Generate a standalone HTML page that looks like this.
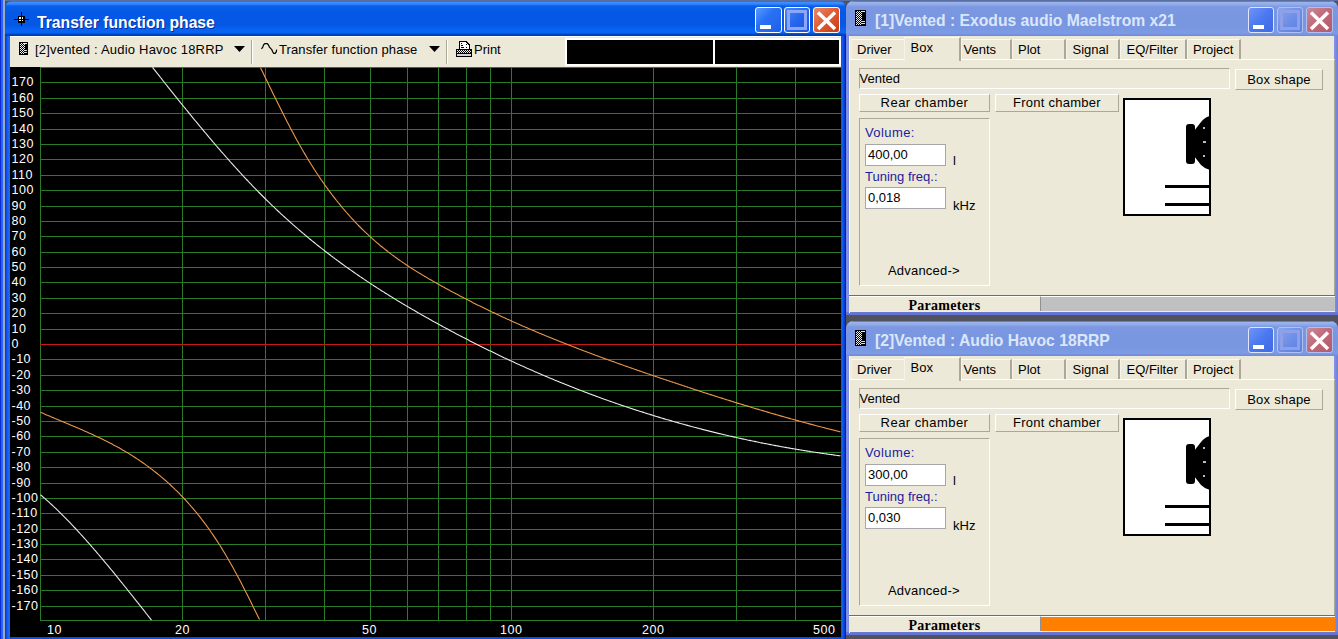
<!DOCTYPE html><html><head><meta charset="utf-8"><style>html,body{margin:0;padding:0;width:1338px;height:639px;overflow:hidden;position:relative}body{font-family:"Liberation Sans",sans-serif}</style></head><body><svg width="0" height="0" style="position:absolute"><defs><pattern id="chk" width="2" height="2" patternUnits="userSpaceOnUse"><rect width="2" height="2" fill="#f0f0f0"/><rect width="1" height="1" fill="#000"/><rect x="1" y="1" width="1" height="1" fill="#000"/></pattern></defs></svg>
<div style="position:absolute;left:0;top:0;width:1338px;height:639px;background:#50535e"></div>
<div style="position:absolute;left:0px;top:0px;width:1338px;height:1px;background:#5a6ea2"></div>
<div style="position:absolute;left:0px;top:0px;width:1px;height:639px;background:#0a2ccf"></div>
<div style="position:absolute;left:1px;top:0px;width:2px;height:639px;background:#2563ff"></div>
<div style="position:absolute;left:3px;top:0px;width:2px;height:639px;background:#9eabbd"></div>
<div style="position:absolute;left:5px;top:1px;width:841px;height:650px;border-radius:7px 7px 0 0;overflow:hidden;background:linear-gradient(to right,#0831d9 0px,#0b44e0 1px,#1a63f5 3px,#1d66f7 5px,#0b4ce6 5px,#0b4ce6 836px,#1261f3 837px,#0a45df 839px,#0016a8 841px)"></div>
<div style="position:absolute;left:5px;top:1px;width:841px;height:35px;border-radius:7px 7px 0 0;background:linear-gradient(to bottom,#2456c8 0px,#3d90ff 1px,#3486fc 3px,#0a5eec 5px,#0558e6 12px,#0458e4 24px,#0862f2 28px,#0866f5 32px,#0048c4 33px,#003aa8 35px)"></div>
<svg style="position:absolute;left:12px;top:11px" width="18" height="17" viewBox="0 0 18 17" shape-rendering="crispEdges"><g fill="#000"><rect x="9" y="1" width="1" height="14"/><rect x="2" y="8" width="15" height="1"/><rect x="6" y="5" width="7" height="7"/></g><g fill="#f4f4f4"><rect x="7" y="6" width="2" height="2"/><rect x="10" y="6" width="1" height="2"/><rect x="7" y="9" width="2" height="1"/><rect x="10" y="9" width="1" height="1"/></g></svg>
<div style="position:absolute;left:37px;top:15.21px;font-family:'Liberation Sans', sans-serif;font-size:15.7px;line-height:15.7px;color:#fff;font-weight:700;white-space:pre;letter-spacing:0px;text-shadow:1px 1px 0 #0a2a9a">Transfer function phase</div>
<div style="position:absolute;left:755px;top:7px;width:25px;height:24px;border:1px solid #ffffff;border-radius:3px;background:linear-gradient(135deg,#5a9bff 0%,#2a72f5 40%,#1d5fe8 100%)"></div>
<div style="position:absolute;left:760px;top:25px;width:11px;height:4px;background:#fff"></div>
<div style="position:absolute;left:784px;top:7px;width:24px;height:24px;border:1px solid #ffffff;border-radius:3px;background:linear-gradient(135deg,#4a8af8 0%,#2566ec 50%,#1a56e0 100%)"></div>
<div style="position:absolute;left:787px;top:10px;width:14px;height:14px;border:3px solid #8ea6f9"></div>
<div style="position:absolute;left:813px;top:7px;width:25px;height:24px;border:1px solid #ffffff;border-radius:3px;background:linear-gradient(135deg,#e88a6a 0%,#e05a32 50%,#c83c14 100%)"></div>
<svg style="position:absolute;left:813px;top:7px" width="27" height="26"><path d="M5,5.6 L22,22 M22,5.6 L5,22" stroke="#fff" stroke-width="3.5" stroke-linecap="butt"/></svg>
<div style="position:absolute;left:10px;top:36px;width:831px;height:31px;background:#ece9d8;border-top:1px solid #fff;box-sizing:border-box"></div>
<svg style="position:absolute;left:19px;top:42px" width="9" height="13" viewBox="0 0 9 13" shape-rendering="crispEdges"><rect x="0" y="0" width="9" height="13" fill="#000"/><rect x="1" y="1" width="5" height="11" fill="url(#chk)"/><rect x="5" y="1" width="3" height="1" fill="#eee"/><rect x="5" y="8" width="3" height="1" fill="#ddd"/><rect x="5" y="10" width="3" height="1" fill="#ddd"/></svg>
<div style="position:absolute;left:35px;top:43.00px;font-family:'Liberation Sans', sans-serif;font-size:13px;line-height:13px;color:#000;font-weight:400;white-space:pre;letter-spacing:0.2px;">[2]vented : Audio Havoc 18RRP</div>
<svg style="position:absolute;left:234px;top:46px" width="11" height="6"><path d="M0,0 L11,0 L5.5,6 Z" fill="#000"/></svg>
<div style="position:absolute;left:251px;top:40px;width:1px;height:24px;background:#aca899;border-right:1px solid #fff"></div>
<svg style="position:absolute;left:254px;top:38px" width="30" height="20" viewBox="254 38 30 20"><path d="M261.5,48.8 L262.8,47 L263.6,44.8 L264.8,43.6 L267.2,43.6 L268.4,44.8 L269.3,47 L270.6,48.4 L271.8,49.6 L272.6,51.8 L273.8,53.4 L275.2,53.4 L276.3,51.8 L276.6,49.6" stroke="#000" stroke-width="1.25" fill="none"/></svg>
<div style="position:absolute;left:279px;top:43.00px;font-family:'Liberation Sans', sans-serif;font-size:13px;line-height:13px;color:#000;font-weight:400;white-space:pre;letter-spacing:0.1px;">Transfer function phase</div>
<svg style="position:absolute;left:429px;top:46px" width="11" height="6"><path d="M0,0 L11,0 L5.5,6 Z" fill="#000"/></svg>
<div style="position:absolute;left:446px;top:40px;width:1px;height:24px;background:#aca899;border-right:1px solid #fff"></div>
<svg style="position:absolute;left:450px;top:36px" width="26" height="24" viewBox="450 36 26 24" shape-rendering="crispEdges"><path d="M459.5,41.5 H466 L469.5,45 V49.5 H459.5 Z" fill="#fff" stroke="#000"/><rect x="461" y="43" width="1" height="1" fill="#000"/><rect x="461" y="45" width="2" height="1" fill="#000"/><rect x="461" y="47" width="3" height="1" fill="#000"/><rect x="466" y="47" width="1" height="1" fill="#000"/><rect x="466" y="44" width="1" height="1" fill="#000"/><rect x="456" y="49" width="16" height="8" fill="#000"/><rect x="457" y="50" width="14" height="3" fill="url(#chk)"/><rect x="457" y="54" width="14" height="2" fill="#d4d4d4"/></svg>
<div style="position:absolute;left:474px;top:43.00px;font-family:'Liberation Sans', sans-serif;font-size:13px;line-height:13px;color:#000;font-weight:400;white-space:pre;letter-spacing:0px;">Print</div>
<div style="position:absolute;left:565px;top:38px;width:276px;height:28px;background:#fff"></div>
<div style="position:absolute;left:567px;top:40px;width:146px;height:24px;background:#000"></div>
<div style="position:absolute;left:715px;top:40px;width:124px;height:24px;background:#000"></div>
<svg style="position:absolute;left:10px;top:67px" width="831" height="570" viewBox="10 67 831 570"><rect x="10" y="67" width="831" height="570" fill="#000"/><g shape-rendering="crispEdges"><rect x="40" y="67" width="801" height="1" fill="#2a7a2a"/><rect x="40" y="82" width="801" height="1" fill="#2a7a2a"/><rect x="40" y="98" width="801" height="1" fill="#2a7a2a"/><rect x="40" y="113" width="801" height="1" fill="#2a7a2a"/><rect x="40" y="129" width="801" height="1" fill="#2a7a2a"/><rect x="40" y="144" width="801" height="1" fill="#2a7a2a"/><rect x="40" y="159" width="801" height="1" fill="#2a7a2a"/><rect x="40" y="175" width="801" height="1" fill="#2a7a2a"/><rect x="40" y="190" width="801" height="1" fill="#2a7a2a"/><rect x="40" y="206" width="801" height="1" fill="#2a7a2a"/><rect x="40" y="221" width="801" height="1" fill="#2a7a2a"/><rect x="40" y="236" width="801" height="1" fill="#2a7a2a"/><rect x="40" y="252" width="801" height="1" fill="#2a7a2a"/><rect x="40" y="267" width="801" height="1" fill="#2a7a2a"/><rect x="40" y="282" width="801" height="1" fill="#2a7a2a"/><rect x="40" y="298" width="801" height="1" fill="#2a7a2a"/><rect x="40" y="313" width="801" height="1" fill="#2a7a2a"/><rect x="40" y="329" width="801" height="1" fill="#2a7a2a"/><rect x="40" y="344" width="801" height="1" fill="#2a7a2a"/><rect x="40" y="359" width="801" height="1" fill="#2a7a2a"/><rect x="40" y="375" width="801" height="1" fill="#2a7a2a"/><rect x="40" y="390" width="801" height="1" fill="#2a7a2a"/><rect x="40" y="406" width="801" height="1" fill="#2a7a2a"/><rect x="40" y="421" width="801" height="1" fill="#2a7a2a"/><rect x="40" y="436" width="801" height="1" fill="#2a7a2a"/><rect x="40" y="452" width="801" height="1" fill="#2a7a2a"/><rect x="40" y="467" width="801" height="1" fill="#2a7a2a"/><rect x="40" y="483" width="801" height="1" fill="#2a7a2a"/><rect x="40" y="498" width="801" height="1" fill="#2a7a2a"/><rect x="40" y="513" width="801" height="1" fill="#2a7a2a"/><rect x="40" y="529" width="801" height="1" fill="#2a7a2a"/><rect x="40" y="544" width="801" height="1" fill="#2a7a2a"/><rect x="40" y="559" width="801" height="1" fill="#2a7a2a"/><rect x="40" y="575" width="801" height="1" fill="#2a7a2a"/><rect x="40" y="590" width="801" height="1" fill="#2a7a2a"/><rect x="40" y="606" width="801" height="1" fill="#2a7a2a"/><rect x="40" y="620" width="801" height="1" fill="#2a7a2a"/><rect x="40" y="67" width="1" height="554" fill="#2a7a2a"/><rect x="182" y="67" width="1" height="554" fill="#2a7a2a"/><rect x="265" y="67" width="1" height="554" fill="#2a7a2a"/><rect x="324" y="67" width="1" height="554" fill="#2a7a2a"/><rect x="370" y="67" width="1" height="554" fill="#2a7a2a"/><rect x="407" y="67" width="1" height="554" fill="#2a7a2a"/><rect x="438" y="67" width="1" height="554" fill="#2a7a2a"/><rect x="466" y="67" width="1" height="554" fill="#2a7a2a"/><rect x="490" y="67" width="1" height="554" fill="#2a7a2a"/><rect x="511" y="67" width="1" height="554" fill="#2a7a2a"/><rect x="653" y="67" width="1" height="554" fill="#2a7a2a"/><rect x="736" y="67" width="1" height="554" fill="#2a7a2a"/><rect x="795" y="67" width="1" height="554" fill="#2a7a2a"/></g><rect x="40" y="344" width="801" height="1" fill="#c81818" shape-rendering="crispEdges"/><g fill="none" stroke-width="1.1"><path d="M40.5,494.8 41.5,495.6 42.5,496.5 43.5,497.3 44.5,498.2 45.5,499.1 46.5,500.0 47.5,500.8 48.5,501.7 49.5,502.7 50.5,503.6 51.5,504.5 52.5,505.4 53.5,506.4 54.5,507.3 55.5,508.2 56.5,509.2 57.5,510.2 58.5,511.1 59.5,512.1 60.5,513.1 61.5,514.1 62.5,515.1 63.5,516.1 64.5,517.1 65.5,518.1 66.5,519.1 67.5,520.1 68.5,521.2 69.5,522.2 70.5,523.2 71.5,524.3 72.5,525.3 73.5,526.4 74.5,527.5 75.5,528.5 76.5,529.6 77.5,530.7 78.5,531.8 79.5,532.9 80.5,534.0 81.5,535.1 82.5,536.2 83.5,537.3 84.5,538.4 85.5,539.5 86.5,540.6 87.5,541.8 88.5,542.9 89.5,544.0 90.5,545.2 91.5,546.3 92.5,547.5 93.5,548.6 94.5,549.8 95.5,550.9 96.5,552.1 97.5,553.3 98.5,554.5 99.5,555.6 100.5,556.8 101.5,558.0 102.5,559.2 103.5,560.4 104.5,561.6 105.5,562.8 106.5,564.0 107.5,565.2 108.5,566.4 109.5,567.6 110.5,568.8 111.5,570.0 112.5,571.2 113.5,572.4 114.5,573.7 115.5,574.9 116.5,576.1 117.5,577.4 118.5,578.6 119.5,579.8 120.5,581.1 121.5,582.3 122.5,583.5 123.5,584.8 124.5,586.0 125.5,587.3 126.5,588.5 127.5,589.8 128.5,591.0 129.5,592.3 130.5,593.5 131.5,594.8 132.5,596.0 133.5,597.3 134.5,598.6 135.5,599.8 136.5,601.1 137.5,602.4 138.5,603.6 139.5,604.9 140.5,606.1 141.5,607.4 142.5,608.7 143.5,609.9 144.5,611.2 145.5,612.5 146.5,613.8 147.5,615.0 148.5,616.3 149.5,617.6 150.5,618.8 151.5,620.1" stroke="#ececec"/><path d="M152.5,67.3 153.5,68.6 154.5,69.9 155.5,71.1 156.5,72.4 157.5,73.7 158.5,74.9 159.5,76.2 160.5,77.5 161.5,78.7 162.5,80.0 163.5,81.3 164.5,82.5 165.5,83.8 166.5,85.0 167.5,86.3 168.5,87.6 169.5,88.8 170.5,90.1 171.5,91.3 172.5,92.6 173.5,93.8 174.5,95.1 175.5,96.3 176.5,97.6 177.5,98.8 178.5,100.1 179.5,101.3 180.5,102.6 181.5,103.8 182.5,105.0 183.5,106.3 184.5,107.5 185.5,108.7 186.5,110.0 187.5,111.2 188.5,112.4 189.5,113.7 190.5,114.9 191.5,116.1 192.5,117.3 193.5,118.6 194.5,119.8 195.5,121.0 196.5,122.2 197.5,123.4 198.5,124.6 199.5,125.8 200.5,127.0 201.5,128.2 202.5,129.4 203.5,130.6 204.5,131.8 205.5,133.0 206.5,134.2 207.5,135.4 208.5,136.6 209.5,137.8 210.5,138.9 211.5,140.1 212.5,141.3 213.5,142.5 214.5,143.6 215.5,144.8 216.5,146.0 217.5,147.1 218.5,148.3 219.5,149.4 220.5,150.6 221.5,151.8 222.5,152.9 223.5,154.0 224.5,155.2 225.5,156.3 226.5,157.5 227.5,158.6 228.5,159.7 229.5,160.8 230.5,162.0 231.5,163.1 232.5,164.2 233.5,165.3 234.5,166.4 235.5,167.5 236.5,168.6 237.5,169.7 238.5,170.8 239.5,171.9 240.5,173.0 241.5,174.1 242.5,175.2 243.5,176.3 244.5,177.3 245.5,178.4 246.5,179.5 247.5,180.5 248.5,181.6 249.5,182.6 250.5,183.7 251.5,184.7 252.5,185.8 253.5,186.8 254.5,187.9 255.5,188.9 256.5,189.9 257.5,190.9 258.5,192.0 259.5,193.0 260.5,194.0 261.5,195.0 262.5,196.0 263.5,197.0 264.5,198.0 265.5,199.0 266.5,200.0 267.5,200.9 268.5,201.9 269.5,202.9 270.5,203.9 271.5,204.8 272.5,205.8 273.5,206.7 274.5,207.7 275.5,208.6 276.5,209.6 277.5,210.5 278.5,211.5 279.5,212.4 280.5,213.3 281.5,214.3 282.5,215.2 283.5,216.1 284.5,217.0 285.5,217.9 286.5,218.8 287.5,219.7 288.5,220.6 289.5,221.5 290.5,222.4 291.5,223.3 292.5,224.2 293.5,225.1 294.5,225.9 295.5,226.8 296.5,227.7 297.5,228.6 298.5,229.4 299.5,230.3 300.5,231.1 301.5,232.0 302.5,232.8 303.5,233.7 304.5,234.5 305.5,235.4 306.5,236.2 307.5,237.0 308.5,237.9 309.5,238.7 310.5,239.5 311.5,240.3 312.5,241.2 313.5,242.0 314.5,242.8 315.5,243.6 316.5,244.4 317.5,245.2 318.5,246.0 319.5,246.8 320.5,247.6 321.5,248.4 322.5,249.1 323.5,249.9 324.5,250.7 325.5,251.5 326.5,252.2 327.5,253.0 328.5,253.8 329.5,254.5 330.5,255.3 331.5,256.1 332.5,256.8 333.5,257.6 334.5,258.3 335.5,259.1 336.5,259.8 337.5,260.6 338.5,261.3 339.5,262.0 340.5,262.8 341.5,263.5 342.5,264.2 343.5,264.9 344.5,265.7 345.5,266.4 346.5,267.1 347.5,267.8 348.5,268.5 349.5,269.2 350.5,269.9 351.5,270.6 352.5,271.3 353.5,272.0 354.5,272.7 355.5,273.4 356.5,274.1 357.5,274.8 358.5,275.5 359.5,276.2 360.5,276.9 361.5,277.5 362.5,278.2 363.5,278.9 364.5,279.6 365.5,280.2 366.5,280.9 367.5,281.6 368.5,282.2 369.5,282.9 370.5,283.5 371.5,284.2 372.5,284.9 373.5,285.5 374.5,286.2 375.5,286.8 376.5,287.5 377.5,288.1 378.5,288.7 379.5,289.4 380.5,290.0 381.5,290.7 382.5,291.3 383.5,291.9 384.5,292.5 385.5,293.2 386.5,293.8 387.5,294.4 388.5,295.0 389.5,295.7 390.5,296.3 391.5,296.9 392.5,297.5 393.5,298.1 394.5,298.7 395.5,299.4 396.5,300.0 397.5,300.6 398.5,301.2 399.5,301.8 400.5,302.4 401.5,303.0 402.5,303.6 403.5,304.2 404.5,304.8 405.5,305.4 406.5,306.0 407.5,306.5 408.5,307.1 409.5,307.7 410.5,308.3 411.5,308.9 412.5,309.5 413.5,310.1 414.5,310.6 415.5,311.2 416.5,311.8 417.5,312.4 418.5,312.9 419.5,313.5 420.5,314.1 421.5,314.7 422.5,315.2 423.5,315.8 424.5,316.4 425.5,316.9 426.5,317.5 427.5,318.1 428.5,318.6 429.5,319.2 430.5,319.8 431.5,320.3 432.5,320.9 433.5,321.4 434.5,322.0 435.5,322.5 436.5,323.1 437.5,323.6 438.5,324.2 439.5,324.7 440.5,325.3 441.5,325.8 442.5,326.4 443.5,326.9 444.5,327.5 445.5,328.0 446.5,328.6 447.5,329.1 448.5,329.6 449.5,330.2 450.5,330.7 451.5,331.2 452.5,331.8 453.5,332.3 454.5,332.8 455.5,333.4 456.5,333.9 457.5,334.4 458.5,334.9 459.5,335.5 460.5,336.0 461.5,336.5 462.5,337.0 463.5,337.6 464.5,338.1 465.5,338.6 466.5,339.1 467.5,339.6 468.5,340.1 469.5,340.7 470.5,341.2 471.5,341.7 472.5,342.2 473.5,342.7 474.5,343.2 475.5,343.7 476.5,344.2 477.5,344.7 478.5,345.2 479.5,345.7 480.5,346.2 481.5,346.7 482.5,347.2 483.5,347.7 484.5,348.2 485.5,348.7 486.5,349.2 487.5,349.7 488.5,350.2 489.5,350.7 490.5,351.1 491.5,351.6 492.5,352.1 493.5,352.6 494.5,353.1 495.5,353.6 496.5,354.1 497.5,354.5 498.5,355.0 499.5,355.5 500.5,356.0 501.5,356.4 502.5,356.9 503.5,357.4 504.5,357.9 505.5,358.3 506.5,358.8 507.5,359.3 508.5,359.7 509.5,360.2 510.5,360.7 511.5,361.1 512.5,361.6 513.5,362.0 514.5,362.5 515.5,363.0 516.5,363.4 517.5,363.9 518.5,364.3 519.5,364.8 520.5,365.2 521.5,365.7 522.5,366.1 523.5,366.6 524.5,367.0 525.5,367.5 526.5,367.9 527.5,368.4 528.5,368.8 529.5,369.3 530.5,369.7 531.5,370.1 532.5,370.6 533.5,371.0 534.5,371.5 535.5,371.9 536.5,372.3 537.5,372.8 538.5,373.2 539.5,373.6 540.5,374.1 541.5,374.5 542.5,374.9 543.5,375.3 544.5,375.8 545.5,376.2 546.5,376.6 547.5,377.0 548.5,377.5 549.5,377.9 550.5,378.3 551.5,378.7 552.5,379.1 553.5,379.5 554.5,380.0 555.5,380.4 556.5,380.8 557.5,381.2 558.5,381.6 559.5,382.0 560.5,382.4 561.5,382.8 562.5,383.2 563.5,383.6 564.5,384.0 565.5,384.4 566.5,384.8 567.5,385.2 568.5,385.6 569.5,386.0 570.5,386.4 571.5,386.8 572.5,387.2 573.5,387.6 574.5,388.0 575.5,388.4 576.5,388.8 577.5,389.2 578.5,389.6 579.5,390.0 580.5,390.3 581.5,390.7 582.5,391.1 583.5,391.5 584.5,391.9 585.5,392.2 586.5,392.6 587.5,393.0 588.5,393.4 589.5,393.8 590.5,394.1 591.5,394.5 592.5,394.9 593.5,395.2 594.5,395.6 595.5,396.0 596.5,396.4 597.5,396.7 598.5,397.1 599.5,397.4 600.5,397.8 601.5,398.2 602.5,398.5 603.5,398.9 604.5,399.3 605.5,399.6 606.5,400.0 607.5,400.3 608.5,400.7 609.5,401.0 610.5,401.4 611.5,401.7 612.5,402.1 613.5,402.4 614.5,402.8 615.5,403.1 616.5,403.5 617.5,403.8 618.5,404.2 619.5,404.5 620.5,404.9 621.5,405.2 622.5,405.5 623.5,405.9 624.5,406.2 625.5,406.6 626.5,406.9 627.5,407.2 628.5,407.6 629.5,407.9 630.5,408.2 631.5,408.5 632.5,408.9 633.5,409.2 634.5,409.5 635.5,409.9 636.5,410.2 637.5,410.5 638.5,410.8 639.5,411.2 640.5,411.5 641.5,411.8 642.5,412.1 643.5,412.4 644.5,412.7 645.5,413.1 646.5,413.4 647.5,413.7 648.5,414.0 649.5,414.3 650.5,414.6 651.5,414.9 652.5,415.2 653.5,415.6 654.5,415.9 655.5,416.2 656.5,416.5 657.5,416.8 658.5,417.1 659.5,417.4 660.5,417.7 661.5,418.0 662.5,418.3 663.5,418.6 664.5,418.9 665.5,419.2 666.5,419.5 667.5,419.7 668.5,420.0 669.5,420.3 670.5,420.6 671.5,420.9 672.5,421.2 673.5,421.5 674.5,421.8 675.5,422.1 676.5,422.3 677.5,422.6 678.5,422.9 679.5,423.2 680.5,423.5 681.5,423.7 682.5,424.0 683.5,424.3 684.5,424.6 685.5,424.8 686.5,425.1 687.5,425.4 688.5,425.7 689.5,425.9 690.5,426.2 691.5,426.5 692.5,426.7 693.5,427.0 694.5,427.3 695.5,427.5 696.5,427.8 697.5,428.1 698.5,428.3 699.5,428.6 700.5,428.8 701.5,429.1 702.5,429.4 703.5,429.6 704.5,429.9 705.5,430.1 706.5,430.4 707.5,430.6 708.5,430.9 709.5,431.1 710.5,431.4 711.5,431.6 712.5,431.9 713.5,432.1 714.5,432.4 715.5,432.6 716.5,432.9 717.5,433.1 718.5,433.4 719.5,433.6 720.5,433.8 721.5,434.1 722.5,434.3 723.5,434.6 724.5,434.8 725.5,435.0 726.5,435.3 727.5,435.5 728.5,435.7 729.5,436.0 730.5,436.2 731.5,436.4 732.5,436.6 733.5,436.9 734.5,437.1 735.5,437.3 736.5,437.5 737.5,437.8 738.5,438.0 739.5,438.2 740.5,438.4 741.5,438.7 742.5,438.9 743.5,439.1 744.5,439.3 745.5,439.5 746.5,439.7 747.5,440.0 748.5,440.2 749.5,440.4 750.5,440.6 751.5,440.8 752.5,441.0 753.5,441.2 754.5,441.4 755.5,441.6 756.5,441.8 757.5,442.0 758.5,442.2 759.5,442.5 760.5,442.7 761.5,442.9 762.5,443.1 763.5,443.3 764.5,443.5 765.5,443.6 766.5,443.8 767.5,444.0 768.5,444.2 769.5,444.4 770.5,444.6 771.5,444.8 772.5,445.0 773.5,445.2 774.5,445.4 775.5,445.6 776.5,445.8 777.5,445.9 778.5,446.1 779.5,446.3 780.5,446.5 781.5,446.7 782.5,446.9 783.5,447.0 784.5,447.2 785.5,447.4 786.5,447.6 787.5,447.8 788.5,447.9 789.5,448.1 790.5,448.3 791.5,448.5 792.5,448.6 793.5,448.8 794.5,449.0 795.5,449.1 796.5,449.3 797.5,449.5 798.5,449.6 799.5,449.8 800.5,450.0 801.5,450.1 802.5,450.3 803.5,450.5 804.5,450.6 805.5,450.8 806.5,450.9 807.5,451.1 808.5,451.3 809.5,451.4 810.5,451.6 811.5,451.7 812.5,451.9 813.5,452.0 814.5,452.2 815.5,452.3 816.5,452.5 817.5,452.6 818.5,452.8 819.5,452.9 820.5,453.1 821.5,453.2 822.5,453.4 823.5,453.5 824.5,453.7 825.5,453.8 826.5,453.9 827.5,454.1 828.5,454.2 829.5,454.4 830.5,454.5 831.5,454.6 832.5,454.8 833.5,454.9 834.5,455.1 835.5,455.2 836.5,455.3 837.5,455.5 838.5,455.6 839.5,455.7 840.5,455.8" stroke="#ececec"/><path d="M40.5,412.3 41.5,412.7 42.5,413.1 43.5,413.6 44.5,414.0 45.5,414.4 46.5,414.9 47.5,415.3 48.5,415.7 49.5,416.1 50.5,416.6 51.5,417.0 52.5,417.4 53.5,417.8 54.5,418.2 55.5,418.7 56.5,419.1 57.5,419.5 58.5,419.9 59.5,420.3 60.5,420.8 61.5,421.2 62.5,421.6 63.5,422.0 64.5,422.4 65.5,422.8 66.5,423.3 67.5,423.7 68.5,424.1 69.5,424.5 70.5,424.9 71.5,425.4 72.5,425.8 73.5,426.2 74.5,426.6 75.5,427.1 76.5,427.5 77.5,427.9 78.5,428.3 79.5,428.8 80.5,429.2 81.5,429.6 82.5,430.1 83.5,430.5 84.5,431.0 85.5,431.4 86.5,431.8 87.5,432.3 88.5,432.7 89.5,433.2 90.5,433.6 91.5,434.1 92.5,434.5 93.5,435.0 94.5,435.5 95.5,435.9 96.5,436.4 97.5,436.9 98.5,437.3 99.5,437.8 100.5,438.3 101.5,438.8 102.5,439.3 103.5,439.8 104.5,440.3 105.5,440.7 106.5,441.3 107.5,441.8 108.5,442.3 109.5,442.8 110.5,443.3 111.5,443.8 112.5,444.3 113.5,444.9 114.5,445.4 115.5,445.9 116.5,446.5 117.5,447.0 118.5,447.6 119.5,448.1 120.5,448.7 121.5,449.3 122.5,449.9 123.5,450.4 124.5,451.0 125.5,451.6 126.5,452.2 127.5,452.8 128.5,453.4 129.5,454.0 130.5,454.6 131.5,455.2 132.5,455.9 133.5,456.5 134.5,457.2 135.5,457.8 136.5,458.5 137.5,459.1 138.5,459.8 139.5,460.5 140.5,461.1 141.5,461.8 142.5,462.5 143.5,463.2 144.5,463.9 145.5,464.6 146.5,465.4 147.5,466.1 148.5,466.8 149.5,467.6 150.5,468.3 151.5,469.1 152.5,469.8 153.5,470.6 154.5,471.4 155.5,472.2 156.5,473.0 157.5,473.8 158.5,474.6 159.5,475.4 160.5,476.2 161.5,477.1 162.5,477.9 163.5,478.8 164.5,479.6 165.5,480.5 166.5,481.4 167.5,482.3 168.5,483.2 169.5,484.1 170.5,485.0 171.5,486.0 172.5,486.9 173.5,487.8 174.5,488.8 175.5,489.8 176.5,490.7 177.5,491.7 178.5,492.7 179.5,493.7 180.5,494.8 181.5,495.8 182.5,496.8 183.5,497.9 184.5,499.0 185.5,500.0 186.5,501.1 187.5,502.2 188.5,503.3 189.5,504.5 190.5,505.6 191.5,506.8 192.5,507.9 193.5,509.1 194.5,510.3 195.5,511.5 196.5,512.7 197.5,513.9 198.5,515.2 199.5,516.4 200.5,517.7 201.5,519.0 202.5,520.3 203.5,521.6 204.5,522.9 205.5,524.3 206.5,525.6 207.5,527.0 208.5,528.4 209.5,529.8 210.5,531.2 211.5,532.7 212.5,534.1 213.5,535.6 214.5,537.1 215.5,538.6 216.5,540.1 217.5,541.6 218.5,543.2 219.5,544.8 220.5,546.3 221.5,547.9 222.5,549.6 223.5,551.2 224.5,552.9 225.5,554.5 226.5,556.2 227.5,557.9 228.5,559.7 229.5,561.4 230.5,563.2 231.5,564.9 232.5,566.7 233.5,568.5 234.5,570.4 235.5,572.2 236.5,574.1 237.5,575.9 238.5,577.8 239.5,579.7 240.5,581.6 241.5,583.6 242.5,585.5 243.5,587.4 244.5,589.4 245.5,591.4 246.5,593.3 247.5,595.3 248.5,597.3 249.5,599.3 250.5,601.3 251.5,603.3 252.5,605.4 253.5,607.4 254.5,609.4 255.5,611.5 256.5,613.5 257.5,615.5 258.5,617.6 259.5,619.6" stroke="#ee9a4c"/><path d="M260.5,67.7 261.5,69.7 262.5,71.8 263.5,73.8 264.5,75.9 265.5,78.0 266.5,80.0 267.5,82.1 268.5,84.2 269.5,86.2 270.5,88.3 271.5,90.3 272.5,92.4 273.5,94.4 274.5,96.5 275.5,98.5 276.5,100.5 277.5,102.6 278.5,104.6 279.5,106.6 280.5,108.6 281.5,110.6 282.5,112.6 283.5,114.6 284.5,116.6 285.5,118.5 286.5,120.5 287.5,122.4 288.5,124.3 289.5,126.3 290.5,128.2 291.5,130.1 292.5,132.0 293.5,133.8 294.5,135.7 295.5,137.5 296.5,139.4 297.5,141.2 298.5,143.0 299.5,144.8 300.5,146.5 301.5,148.3 302.5,150.0 303.5,151.7 304.5,153.4 305.5,155.1 306.5,156.8 307.5,158.5 308.5,160.1 309.5,161.7 310.5,163.4 311.5,165.0 312.5,166.5 313.5,168.1 314.5,169.7 315.5,171.2 316.5,172.7 317.5,174.2 318.5,175.7 319.5,177.2 320.5,178.7 321.5,180.2 322.5,181.6 323.5,183.0 324.5,184.5 325.5,185.9 326.5,187.3 327.5,188.6 328.5,190.0 329.5,191.4 330.5,192.7 331.5,194.0 332.5,195.3 333.5,196.6 334.5,197.9 335.5,199.2 336.5,200.5 337.5,201.7 338.5,203.0 339.5,204.2 340.5,205.4 341.5,206.6 342.5,207.8 343.5,209.0 344.5,210.2 345.5,211.3 346.5,212.5 347.5,213.6 348.5,214.7 349.5,215.9 350.5,217.0 351.5,218.1 352.5,219.2 353.5,220.2 354.5,221.3 355.5,222.3 356.5,223.4 357.5,224.4 358.5,225.5 359.5,226.5 360.5,227.5 361.5,228.5 362.5,229.5 363.5,230.4 364.5,231.4 365.5,232.4 366.5,233.3 367.5,234.2 368.5,235.2 369.5,236.1 370.5,237.0 371.5,237.9 372.5,238.8 373.5,239.7 374.5,240.6 375.5,241.4 376.5,242.3 377.5,243.2 378.5,244.0 379.5,244.9 380.5,245.7 381.5,246.5 382.5,247.3 383.5,248.1 384.5,248.9 385.5,249.7 386.5,250.5 387.5,251.3 388.5,252.1 389.5,252.8 390.5,253.6 391.5,254.4 392.5,255.1 393.5,255.8 394.5,256.6 395.5,257.3 396.5,258.0 397.5,258.8 398.5,259.5 399.5,260.2 400.5,260.9 401.5,261.6 402.5,262.2 403.5,262.9 404.5,263.6 405.5,264.3 406.5,265.0 407.5,265.6 408.5,266.3 409.5,266.9 410.5,267.6 411.5,268.2 412.5,268.9 413.5,269.5 414.5,270.1 415.5,270.8 416.5,271.4 417.5,272.0 418.5,272.6 419.5,273.2 420.5,273.8 421.5,274.4 422.5,275.0 423.5,275.6 424.5,276.2 425.5,276.8 426.5,277.4 427.5,278.0 428.5,278.6 429.5,279.2 430.5,279.7 431.5,280.3 432.5,280.9 433.5,281.5 434.5,282.0 435.5,282.6 436.5,283.2 437.5,283.7 438.5,284.3 439.5,284.8 440.5,285.4 441.5,285.9 442.5,286.5 443.5,287.1 444.5,287.6 445.5,288.2 446.5,288.7 447.5,289.2 448.5,289.8 449.5,290.3 450.5,290.9 451.5,291.4 452.5,291.9 453.5,292.5 454.5,293.0 455.5,293.5 456.5,294.1 457.5,294.6 458.5,295.1 459.5,295.7 460.5,296.2 461.5,296.7 462.5,297.2 463.5,297.7 464.5,298.3 465.5,298.8 466.5,299.3 467.5,299.8 468.5,300.3 469.5,300.8 470.5,301.3 471.5,301.8 472.5,302.4 473.5,302.9 474.5,303.4 475.5,303.9 476.5,304.4 477.5,304.9 478.5,305.4 479.5,305.8 480.5,306.3 481.5,306.8 482.5,307.3 483.5,307.8 484.5,308.3 485.5,308.8 486.5,309.3 487.5,309.8 488.5,310.2 489.5,310.7 490.5,311.2 491.5,311.7 492.5,312.2 493.5,312.6 494.5,313.1 495.5,313.6 496.5,314.1 497.5,314.5 498.5,315.0 499.5,315.5 500.5,315.9 501.5,316.4 502.5,316.9 503.5,317.3 504.5,317.8 505.5,318.2 506.5,318.7 507.5,319.2 508.5,319.6 509.5,320.1 510.5,320.5 511.5,321.0 512.5,321.4 513.5,321.9 514.5,322.3 515.5,322.8 516.5,323.2 517.5,323.7 518.5,324.1 519.5,324.5 520.5,325.0 521.5,325.4 522.5,325.9 523.5,326.3 524.5,326.7 525.5,327.2 526.5,327.6 527.5,328.0 528.5,328.5 529.5,328.9 530.5,329.3 531.5,329.8 532.5,330.2 533.5,330.6 534.5,331.0 535.5,331.5 536.5,331.9 537.5,332.3 538.5,332.7 539.5,333.2 540.5,333.6 541.5,334.0 542.5,334.4 543.5,334.8 544.5,335.2 545.5,335.7 546.5,336.1 547.5,336.5 548.5,336.9 549.5,337.3 550.5,337.7 551.5,338.1 552.5,338.5 553.5,338.9 554.5,339.3 555.5,339.7 556.5,340.1 557.5,340.5 558.5,340.9 559.5,341.3 560.5,341.7 561.5,342.1 562.5,342.5 563.5,342.9 564.5,343.3 565.5,343.7 566.5,344.1 567.5,344.5 568.5,344.9 569.5,345.3 570.5,345.7 571.5,346.1 572.5,346.5 573.5,346.8 574.5,347.2 575.5,347.6 576.5,348.0 577.5,348.4 578.5,348.8 579.5,349.2 580.5,349.5 581.5,349.9 582.5,350.3 583.5,350.7 584.5,351.1 585.5,351.4 586.5,351.8 587.5,352.2 588.5,352.6 589.5,352.9 590.5,353.3 591.5,353.7 592.5,354.1 593.5,354.4 594.5,354.8 595.5,355.2 596.5,355.5 597.5,355.9 598.5,356.3 599.5,356.7 600.5,357.0 601.5,357.4 602.5,357.8 603.5,358.1 604.5,358.5 605.5,358.9 606.5,359.2 607.5,359.6 608.5,359.9 609.5,360.3 610.5,360.7 611.5,361.0 612.5,361.4 613.5,361.7 614.5,362.1 615.5,362.5 616.5,362.8 617.5,363.2 618.5,363.5 619.5,363.9 620.5,364.2 621.5,364.6 622.5,365.0 623.5,365.3 624.5,365.7 625.5,366.0 626.5,366.4 627.5,366.7 628.5,367.1 629.5,367.4 630.5,367.8 631.5,368.1 632.5,368.5 633.5,368.8 634.5,369.2 635.5,369.5 636.5,369.9 637.5,370.2 638.5,370.6 639.5,370.9 640.5,371.2 641.5,371.6 642.5,371.9 643.5,372.3 644.5,372.6 645.5,373.0 646.5,373.3 647.5,373.7 648.5,374.0 649.5,374.3 650.5,374.7 651.5,375.0 652.5,375.4 653.5,375.7 654.5,376.1 655.5,376.4 656.5,376.7 657.5,377.1 658.5,377.4 659.5,377.8 660.5,378.1 661.5,378.4 662.5,378.8 663.5,379.1 664.5,379.5 665.5,379.8 666.5,380.1 667.5,380.5 668.5,380.8 669.5,381.1 670.5,381.5 671.5,381.8 672.5,382.1 673.5,382.5 674.5,382.8 675.5,383.1 676.5,383.5 677.5,383.8 678.5,384.1 679.5,384.5 680.5,384.8 681.5,385.1 682.5,385.5 683.5,385.8 684.5,386.1 685.5,386.5 686.5,386.8 687.5,387.1 688.5,387.5 689.5,387.8 690.5,388.1 691.5,388.4 692.5,388.8 693.5,389.1 694.5,389.4 695.5,389.8 696.5,390.1 697.5,390.4 698.5,390.7 699.5,391.1 700.5,391.4 701.5,391.7 702.5,392.0 703.5,392.4 704.5,392.7 705.5,393.0 706.5,393.3 707.5,393.6 708.5,394.0 709.5,394.3 710.5,394.6 711.5,394.9 712.5,395.2 713.5,395.6 714.5,395.9 715.5,396.2 716.5,396.5 717.5,396.8 718.5,397.2 719.5,397.5 720.5,397.8 721.5,398.1 722.5,398.4 723.5,398.7 724.5,399.0 725.5,399.4 726.5,399.7 727.5,400.0 728.5,400.3 729.5,400.6 730.5,400.9 731.5,401.2 732.5,401.5 733.5,401.9 734.5,402.2 735.5,402.5 736.5,402.8 737.5,403.1 738.5,403.4 739.5,403.7 740.5,404.0 741.5,404.3 742.5,404.6 743.5,404.9 744.5,405.2 745.5,405.5 746.5,405.8 747.5,406.1 748.5,406.4 749.5,406.7 750.5,407.1 751.5,407.4 752.5,407.7 753.5,408.0 754.5,408.3 755.5,408.6 756.5,408.9 757.5,409.1 758.5,409.4 759.5,409.7 760.5,410.0 761.5,410.3 762.5,410.6 763.5,410.9 764.5,411.2 765.5,411.5 766.5,411.8 767.5,412.1 768.5,412.4 769.5,412.7 770.5,413.0 771.5,413.3 772.5,413.6 773.5,413.8 774.5,414.1 775.5,414.4 776.5,414.7 777.5,415.0 778.5,415.3 779.5,415.6 780.5,415.9 781.5,416.1 782.5,416.4 783.5,416.7 784.5,417.0 785.5,417.3 786.5,417.6 787.5,417.8 788.5,418.1 789.5,418.4 790.5,418.7 791.5,419.0 792.5,419.2 793.5,419.5 794.5,419.8 795.5,420.1 796.5,420.3 797.5,420.6 798.5,420.9 799.5,421.2 800.5,421.4 801.5,421.7 802.5,422.0 803.5,422.2 804.5,422.5 805.5,422.8 806.5,423.1 807.5,423.3 808.5,423.6 809.5,423.9 810.5,424.1 811.5,424.4 812.5,424.7 813.5,424.9 814.5,425.2 815.5,425.5 816.5,425.7 817.5,426.0 818.5,426.2 819.5,426.5 820.5,426.8 821.5,427.0 822.5,427.3 823.5,427.5 824.5,427.8 825.5,428.1 826.5,428.3 827.5,428.6 828.5,428.8 829.5,429.1 830.5,429.3 831.5,429.6 832.5,429.8 833.5,430.1 834.5,430.3 835.5,430.6 836.5,430.8 837.5,431.1 838.5,431.3 839.5,431.6 840.5,431.8" stroke="#ee9a4c"/></g></svg>
<div style="position:absolute;left:11.5px;top:75.72px;font-family:'Liberation Sans', sans-serif;font-size:12.5px;line-height:12.5px;color:#fff;font-weight:400;white-space:pre;letter-spacing:0.5px;">170</div>
<div style="position:absolute;left:11.5px;top:91.72px;font-family:'Liberation Sans', sans-serif;font-size:12.5px;line-height:12.5px;color:#fff;font-weight:400;white-space:pre;letter-spacing:0.5px;">160</div>
<div style="position:absolute;left:11.5px;top:106.72px;font-family:'Liberation Sans', sans-serif;font-size:12.5px;line-height:12.5px;color:#fff;font-weight:400;white-space:pre;letter-spacing:0.5px;">150</div>
<div style="position:absolute;left:11.5px;top:122.72px;font-family:'Liberation Sans', sans-serif;font-size:12.5px;line-height:12.5px;color:#fff;font-weight:400;white-space:pre;letter-spacing:0.5px;">140</div>
<div style="position:absolute;left:11.5px;top:137.72px;font-family:'Liberation Sans', sans-serif;font-size:12.5px;line-height:12.5px;color:#fff;font-weight:400;white-space:pre;letter-spacing:0.5px;">130</div>
<div style="position:absolute;left:11.5px;top:152.72px;font-family:'Liberation Sans', sans-serif;font-size:12.5px;line-height:12.5px;color:#fff;font-weight:400;white-space:pre;letter-spacing:0.5px;">120</div>
<div style="position:absolute;left:11.5px;top:168.72px;font-family:'Liberation Sans', sans-serif;font-size:12.5px;line-height:12.5px;color:#fff;font-weight:400;white-space:pre;letter-spacing:0.5px;">110</div>
<div style="position:absolute;left:11.5px;top:183.72px;font-family:'Liberation Sans', sans-serif;font-size:12.5px;line-height:12.5px;color:#fff;font-weight:400;white-space:pre;letter-spacing:0.5px;">100</div>
<div style="position:absolute;left:11.5px;top:199.72px;font-family:'Liberation Sans', sans-serif;font-size:12.5px;line-height:12.5px;color:#fff;font-weight:400;white-space:pre;letter-spacing:0.5px;">90</div>
<div style="position:absolute;left:11.5px;top:214.72px;font-family:'Liberation Sans', sans-serif;font-size:12.5px;line-height:12.5px;color:#fff;font-weight:400;white-space:pre;letter-spacing:0.5px;">80</div>
<div style="position:absolute;left:11.5px;top:229.72px;font-family:'Liberation Sans', sans-serif;font-size:12.5px;line-height:12.5px;color:#fff;font-weight:400;white-space:pre;letter-spacing:0.5px;">70</div>
<div style="position:absolute;left:11.5px;top:245.72px;font-family:'Liberation Sans', sans-serif;font-size:12.5px;line-height:12.5px;color:#fff;font-weight:400;white-space:pre;letter-spacing:0.5px;">60</div>
<div style="position:absolute;left:11.5px;top:260.72px;font-family:'Liberation Sans', sans-serif;font-size:12.5px;line-height:12.5px;color:#fff;font-weight:400;white-space:pre;letter-spacing:0.5px;">50</div>
<div style="position:absolute;left:11.5px;top:275.72px;font-family:'Liberation Sans', sans-serif;font-size:12.5px;line-height:12.5px;color:#fff;font-weight:400;white-space:pre;letter-spacing:0.5px;">40</div>
<div style="position:absolute;left:11.5px;top:291.72px;font-family:'Liberation Sans', sans-serif;font-size:12.5px;line-height:12.5px;color:#fff;font-weight:400;white-space:pre;letter-spacing:0.5px;">30</div>
<div style="position:absolute;left:11.5px;top:306.72px;font-family:'Liberation Sans', sans-serif;font-size:12.5px;line-height:12.5px;color:#fff;font-weight:400;white-space:pre;letter-spacing:0.5px;">20</div>
<div style="position:absolute;left:11.5px;top:322.72px;font-family:'Liberation Sans', sans-serif;font-size:12.5px;line-height:12.5px;color:#fff;font-weight:400;white-space:pre;letter-spacing:0.5px;">10</div>
<div style="position:absolute;left:11.5px;top:337.72px;font-family:'Liberation Sans', sans-serif;font-size:12.5px;line-height:12.5px;color:#fff;font-weight:400;white-space:pre;letter-spacing:0.5px;">0</div>
<div style="position:absolute;left:11.5px;top:352.72px;font-family:'Liberation Sans', sans-serif;font-size:12.5px;line-height:12.5px;color:#fff;font-weight:400;white-space:pre;letter-spacing:0.5px;">-10</div>
<div style="position:absolute;left:11.5px;top:368.72px;font-family:'Liberation Sans', sans-serif;font-size:12.5px;line-height:12.5px;color:#fff;font-weight:400;white-space:pre;letter-spacing:0.5px;">-20</div>
<div style="position:absolute;left:11.5px;top:383.72px;font-family:'Liberation Sans', sans-serif;font-size:12.5px;line-height:12.5px;color:#fff;font-weight:400;white-space:pre;letter-spacing:0.5px;">-30</div>
<div style="position:absolute;left:11.5px;top:399.72px;font-family:'Liberation Sans', sans-serif;font-size:12.5px;line-height:12.5px;color:#fff;font-weight:400;white-space:pre;letter-spacing:0.5px;">-40</div>
<div style="position:absolute;left:11.5px;top:414.72px;font-family:'Liberation Sans', sans-serif;font-size:12.5px;line-height:12.5px;color:#fff;font-weight:400;white-space:pre;letter-spacing:0.5px;">-50</div>
<div style="position:absolute;left:11.5px;top:429.72px;font-family:'Liberation Sans', sans-serif;font-size:12.5px;line-height:12.5px;color:#fff;font-weight:400;white-space:pre;letter-spacing:0.5px;">-60</div>
<div style="position:absolute;left:11.5px;top:445.72px;font-family:'Liberation Sans', sans-serif;font-size:12.5px;line-height:12.5px;color:#fff;font-weight:400;white-space:pre;letter-spacing:0.5px;">-70</div>
<div style="position:absolute;left:11.5px;top:460.72px;font-family:'Liberation Sans', sans-serif;font-size:12.5px;line-height:12.5px;color:#fff;font-weight:400;white-space:pre;letter-spacing:0.5px;">-80</div>
<div style="position:absolute;left:11.5px;top:476.72px;font-family:'Liberation Sans', sans-serif;font-size:12.5px;line-height:12.5px;color:#fff;font-weight:400;white-space:pre;letter-spacing:0.5px;">-90</div>
<div style="position:absolute;left:11.5px;top:491.72px;font-family:'Liberation Sans', sans-serif;font-size:12.5px;line-height:12.5px;color:#fff;font-weight:400;white-space:pre;letter-spacing:0.5px;">-100</div>
<div style="position:absolute;left:11.5px;top:506.72px;font-family:'Liberation Sans', sans-serif;font-size:12.5px;line-height:12.5px;color:#fff;font-weight:400;white-space:pre;letter-spacing:0.5px;">-110</div>
<div style="position:absolute;left:11.5px;top:522.72px;font-family:'Liberation Sans', sans-serif;font-size:12.5px;line-height:12.5px;color:#fff;font-weight:400;white-space:pre;letter-spacing:0.5px;">-120</div>
<div style="position:absolute;left:11.5px;top:537.72px;font-family:'Liberation Sans', sans-serif;font-size:12.5px;line-height:12.5px;color:#fff;font-weight:400;white-space:pre;letter-spacing:0.5px;">-130</div>
<div style="position:absolute;left:11.5px;top:552.72px;font-family:'Liberation Sans', sans-serif;font-size:12.5px;line-height:12.5px;color:#fff;font-weight:400;white-space:pre;letter-spacing:0.5px;">-140</div>
<div style="position:absolute;left:11.5px;top:568.72px;font-family:'Liberation Sans', sans-serif;font-size:12.5px;line-height:12.5px;color:#fff;font-weight:400;white-space:pre;letter-spacing:0.5px;">-150</div>
<div style="position:absolute;left:11.5px;top:583.72px;font-family:'Liberation Sans', sans-serif;font-size:12.5px;line-height:12.5px;color:#fff;font-weight:400;white-space:pre;letter-spacing:0.5px;">-160</div>
<div style="position:absolute;left:11.5px;top:599.72px;font-family:'Liberation Sans', sans-serif;font-size:12.5px;line-height:12.5px;color:#fff;font-weight:400;white-space:pre;letter-spacing:0.5px;">-170</div>
<div style="position:absolute;left:47px;top:623.92px;font-family:'Liberation Sans', sans-serif;font-size:12.5px;line-height:12.5px;color:#fff;font-weight:400;white-space:pre;letter-spacing:0.5px;">10</div>
<div style="position:absolute;left:175px;top:623.92px;font-family:'Liberation Sans', sans-serif;font-size:12.5px;line-height:12.5px;color:#fff;font-weight:400;white-space:pre;letter-spacing:0.5px;">20</div>
<div style="position:absolute;left:362px;top:623.92px;font-family:'Liberation Sans', sans-serif;font-size:12.5px;line-height:12.5px;color:#fff;font-weight:400;white-space:pre;letter-spacing:0.5px;">50</div>
<div style="position:absolute;left:500px;top:623.92px;font-family:'Liberation Sans', sans-serif;font-size:12.5px;line-height:12.5px;color:#fff;font-weight:400;white-space:pre;letter-spacing:0.5px;">100</div>
<div style="position:absolute;left:642px;top:623.92px;font-family:'Liberation Sans', sans-serif;font-size:12.5px;line-height:12.5px;color:#fff;font-weight:400;white-space:pre;letter-spacing:0.5px;">200</div>
<div style="position:absolute;left:813px;top:623.92px;font-family:'Liberation Sans', sans-serif;font-size:12.5px;line-height:12.5px;color:#fff;font-weight:400;white-space:pre;letter-spacing:0.5px;">500</div>
<div style="position:absolute;left:846px;top:1px;width:492px;height:315px;border-radius:8px 8px 0 0;overflow:hidden;background:linear-gradient(to right,#6f84d8 0px,#8595e6 1px,#7b8ce2 3px,#ece9d8 3px,#ece9d8 488px,#8495e6 488px,#6d7fd6 492px)"></div>
<div style="position:absolute;left:846px;top:312px;width:492px;height:4px;background:linear-gradient(to bottom,#6a78d8 0px,#6270d0 3px,#4a4e90 3px)"></div>
<div style="position:absolute;left:846px;top:1px;width:492px;height:35px;border-radius:8px 8px 0 0;background:linear-gradient(to bottom,#3a4a78 0px,#9ab4ec 1px,#94aeea 3px,#7d98e2 6px,#7896e0 18px,#7a98e2 28px,#7e9ce6 32px,#7088d8 35px)"></div>
<svg style="position:absolute;left:855px;top:10px" width="11" height="16" viewBox="0 0 11 16" shape-rendering="crispEdges"><rect x="0" y="0" width="11" height="16" fill="#000"/><rect x="1" y="1" width="6" height="14" fill="url(#chk)"/><rect x="6" y="1" width="4" height="1" fill="#eee"/><rect x="6" y="11" width="4" height="1" fill="#ddd"/><rect x="6" y="13" width="4" height="1" fill="#ddd"/></svg>
<div style="position:absolute;left:875px;top:13.41px;font-family:'Liberation Sans', sans-serif;font-size:15.7px;line-height:15.7px;color:#dce6fb;font-weight:700;white-space:pre;letter-spacing:0px;">[1]Vented : Exodus audio Maelstrom x21</div>
<div style="position:absolute;left:1248px;top:7px;width:24px;height:24px;border:1px solid #dfe6fb;border-radius:3px;background:linear-gradient(135deg,#6f95f6 0%,#4a78ee 50%,#3e6be6 100%)"></div>
<div style="position:absolute;left:1253px;top:25px;width:11px;height:4px;background:#fff"></div>
<div style="position:absolute;left:1277px;top:7px;width:24px;height:24px;border:1px solid #b0c0f0;border-radius:3px;background:linear-gradient(135deg,#8aa6f0 0%,#6e8fe8 50%,#5a7ee0 100%)"></div>
<div style="position:absolute;left:1280px;top:10px;width:14px;height:14px;border:3px solid #8ea0e8"></div>
<div style="position:absolute;left:1306px;top:7px;width:25px;height:24px;border:1px solid #b0c0f0;border-radius:3px;background:linear-gradient(135deg,#c88a9a 0%,#c06878 50%,#b05a6a 100%)"></div>
<svg style="position:absolute;left:1306px;top:7px" width="27" height="26"><path d="M5,5.6 L22,22 M22,5.6 L5,22" stroke="#fff" stroke-width="3.5" stroke-linecap="butt"/></svg>
<div style="position:absolute;left:849px;top:36px;width:1px;height:277px;background:#fff"></div>
<div style="position:absolute;left:849px;top:59px;width:486px;height:237px;border-top:1px solid #fff;border-right:1px solid #aca899;box-sizing:border-box"></div>
<div style="position:absolute;left:851px;top:39px;width:53px;height:20px;background:#ece9d8;border-top:1px solid #fbfaf4;border-left:1px solid #f6f4ea;box-sizing:border-box;"></div>
<div style="position:absolute;left:857px;top:43.00px;font-family:'Liberation Sans', sans-serif;font-size:13px;line-height:13px;color:#000;font-weight:400;white-space:pre;letter-spacing:0px;">Driver</div>
<div style="position:absolute;left:904px;top:37px;width:57px;height:24px;background:#ece9d8;border-top:1px solid #fbfaf4;border-left:1px solid #f6f4ea;box-sizing:border-box;border-right:2px solid #aca899;border-right:2px solid #aca899;"></div>
<div style="position:absolute;left:910.5px;top:41.00px;font-family:'Liberation Sans', sans-serif;font-size:13px;line-height:13px;color:#000;font-weight:400;white-space:pre;letter-spacing:0px;">Box</div>
<div style="position:absolute;left:961px;top:39px;width:51px;height:20px;background:#ece9d8;border-top:1px solid #fbfaf4;border-left:1px solid #f6f4ea;box-sizing:border-box;border-right:2px solid #aca899;"></div>
<div style="position:absolute;left:963.5px;top:43.00px;font-family:'Liberation Sans', sans-serif;font-size:13px;line-height:13px;color:#000;font-weight:400;white-space:pre;letter-spacing:0px;">Vents</div>
<div style="position:absolute;left:1012px;top:39px;width:54px;height:20px;background:#ece9d8;border-top:1px solid #fbfaf4;border-left:1px solid #f6f4ea;box-sizing:border-box;border-right:2px solid #aca899;"></div>
<div style="position:absolute;left:1018px;top:43.00px;font-family:'Liberation Sans', sans-serif;font-size:13px;line-height:13px;color:#000;font-weight:400;white-space:pre;letter-spacing:0px;">Plot</div>
<div style="position:absolute;left:1066px;top:39px;width:54px;height:20px;background:#ece9d8;border-top:1px solid #fbfaf4;border-left:1px solid #f6f4ea;box-sizing:border-box;border-right:2px solid #aca899;"></div>
<div style="position:absolute;left:1072.5px;top:43.00px;font-family:'Liberation Sans', sans-serif;font-size:13px;line-height:13px;color:#000;font-weight:400;white-space:pre;letter-spacing:0px;">Signal</div>
<div style="position:absolute;left:1120px;top:39px;width:67px;height:20px;background:#ece9d8;border-top:1px solid #fbfaf4;border-left:1px solid #f6f4ea;box-sizing:border-box;border-right:2px solid #aca899;"></div>
<div style="position:absolute;left:1126.5px;top:43.00px;font-family:'Liberation Sans', sans-serif;font-size:13px;line-height:13px;color:#000;font-weight:400;white-space:pre;letter-spacing:0px;">EQ/Filter</div>
<div style="position:absolute;left:1187px;top:39px;width:54px;height:20px;background:#ece9d8;border-top:1px solid #fbfaf4;border-left:1px solid #f6f4ea;box-sizing:border-box;border-right:2px solid #aca899;"></div>
<div style="position:absolute;left:1193px;top:43.00px;font-family:'Liberation Sans', sans-serif;font-size:13px;line-height:13px;color:#000;font-weight:400;white-space:pre;letter-spacing:0px;">Project</div>
<div style="position:absolute;left:859px;top:68px;width:371px;height:21px;border-top:1px solid #aca899;border-left:1px solid #aca899;border-bottom:1px solid #fff;border-right:1px solid #fff;box-sizing:border-box"></div>
<div style="position:absolute;left:859.5px;top:72.00px;font-family:'Liberation Sans', sans-serif;font-size:13px;line-height:13px;color:#000;font-weight:400;white-space:pre;letter-spacing:0px;">Vented</div>
<div style="position:absolute;left:1235px;top:69px;width:88px;height:21px;border-top:1px solid #fff;border-left:1px solid #fff;border-bottom:1px solid #aca899;border-right:1px solid #aca899;box-sizing:border-box"></div>
<div style="position:absolute;left:1235px;top:69px;width:88px;height:21px;font-family:'Liberation Sans', sans-serif;font-size:13px;line-height:21px;text-align:center;white-space:pre;letter-spacing:0.25px">Box shape</div>
<div style="position:absolute;left:859px;top:94px;width:131px;height:18px;border-top:1px solid #fff;border-left:1px solid #fff;border-bottom:1px solid #aca899;border-right:1px solid #aca899;box-sizing:border-box"></div>
<div style="position:absolute;left:859px;top:94px;width:131px;height:18px;font-family:'Liberation Sans', sans-serif;font-size:13px;line-height:18px;text-align:center;white-space:pre;letter-spacing:0.45px">Rear chamber</div>
<div style="position:absolute;left:995px;top:94px;width:124px;height:18px;border-top:1px solid #fff;border-left:1px solid #fff;border-bottom:1px solid #aca899;border-right:1px solid #aca899;box-sizing:border-box"></div>
<div style="position:absolute;left:995px;top:94px;width:124px;height:18px;font-family:'Liberation Sans', sans-serif;font-size:13px;line-height:18px;text-align:center;white-space:pre;letter-spacing:0.25px">Front chamber</div>
<div style="position:absolute;left:859px;top:118px;width:131px;height:168px;border-top:1px solid #aca899;border-left:1px solid #aca899;border-bottom:1px solid #fff;border-right:1px solid #fff;box-sizing:border-box"></div>
<div style="position:absolute;left:865px;top:126.00px;font-family:'Liberation Sans', sans-serif;font-size:13px;line-height:13px;color:#1c1ca0;font-weight:400;white-space:pre;letter-spacing:0.4px;">Volume:</div>
<div style="position:absolute;left:865px;top:144px;width:81px;height:22px;background:#fff;border:1px solid #a7a6aa;box-sizing:border-box"></div>
<div style="position:absolute;left:868px;top:148.00px;font-family:'Liberation Sans', sans-serif;font-size:13px;line-height:13px;color:#000;font-weight:400;white-space:pre;letter-spacing:0px;">400,00</div>
<div style="position:absolute;left:953px;top:154.00px;font-family:'Liberation Sans', sans-serif;font-size:13px;line-height:13px;color:#000;font-weight:400;white-space:pre;letter-spacing:0px;">l</div>
<div style="position:absolute;left:865px;top:170.00px;font-family:'Liberation Sans', sans-serif;font-size:13px;line-height:13px;color:#1c1ca0;font-weight:400;white-space:pre;letter-spacing:0px;">Tuning freq.:</div>
<div style="position:absolute;left:865px;top:187px;width:81px;height:22px;background:#fff;border:1px solid #a7a6aa;box-sizing:border-box"></div>
<div style="position:absolute;left:868px;top:191.00px;font-family:'Liberation Sans', sans-serif;font-size:13px;line-height:13px;color:#000;font-weight:400;white-space:pre;letter-spacing:0px;">0,018</div>
<div style="position:absolute;left:953px;top:199.00px;font-family:'Liberation Sans', sans-serif;font-size:13px;line-height:13px;color:#000;font-weight:400;white-space:pre;letter-spacing:0px;">kHz</div>
<div style="position:absolute;left:888px;top:264.00px;font-family:'Liberation Sans', sans-serif;font-size:13px;line-height:13px;color:#000;font-weight:400;white-space:pre;letter-spacing:0.2px;">Advanced-></div>
<svg style="position:absolute;left:1123px;top:98px" width="89" height="119" viewBox="0 0 89 119"><rect x="1" y="1" width="86" height="116" fill="#fff" stroke="#000" stroke-width="2"/><rect x="63" y="26" width="9" height="40" rx="3" fill="#000"/><path d="M71,33 L78,24 Q82,19 87,18 L87,72 Q82,71 78,67 L71,58 Z" fill="#000"/><rect x="80" y="29" width="2" height="2" fill="#bbb"/><rect x="80" y="43" width="3" height="2" fill="#bbb"/><rect x="80" y="57" width="2" height="2" fill="#bbb"/><rect x="42" y="87" width="46" height="3" fill="#000"/><rect x="42" y="105" width="46" height="3" fill="#000"/></svg>
<div style="position:absolute;left:849px;top:295px;width:486px;height:1px;background:#716f64"></div>
<div style="position:absolute;left:849px;top:296px;width:191px;height:15px;background:#ece9d8;border-top:1px solid #fff;box-sizing:border-box"></div>
<div style="position:absolute;left:849px;top:296px;width:191px;height:15px;font-family:'Liberation Serif', serif;font-size:14px;font-weight:700;line-height:15px;text-align:center;white-space:pre;letter-spacing:0.3px;padding-top:2px;box-sizing:border-box">Parameters</div>
<div style="position:absolute;left:1040px;top:296px;width:295px;height:15px;background:#c0c0c0;border-top:1px solid #fff;border-left:1px solid #909090;box-sizing:border-box"></div>
<div style="position:absolute;left:849px;top:311px;width:486px;height:1px;background:#e8ecff"></div>
<div style="position:absolute;left:846px;top:321px;width:492px;height:315px;border-radius:8px 8px 0 0;overflow:hidden;background:linear-gradient(to right,#6f84d8 0px,#8595e6 1px,#7b8ce2 3px,#ece9d8 3px,#ece9d8 488px,#8495e6 488px,#6d7fd6 492px)"></div>
<div style="position:absolute;left:846px;top:632px;width:492px;height:4px;background:linear-gradient(to bottom,#6a78d8 0px,#6270d0 3px,#4a4e90 3px)"></div>
<div style="position:absolute;left:846px;top:321px;width:492px;height:35px;border-radius:8px 8px 0 0;background:linear-gradient(to bottom,#3a4a78 0px,#9ab4ec 1px,#94aeea 3px,#7d98e2 6px,#7896e0 18px,#7a98e2 28px,#7e9ce6 32px,#7088d8 35px)"></div>
<svg style="position:absolute;left:855px;top:330px" width="11" height="16" viewBox="0 0 11 16" shape-rendering="crispEdges"><rect x="0" y="0" width="11" height="16" fill="#000"/><rect x="1" y="1" width="6" height="14" fill="url(#chk)"/><rect x="6" y="1" width="4" height="1" fill="#eee"/><rect x="6" y="11" width="4" height="1" fill="#ddd"/><rect x="6" y="13" width="4" height="1" fill="#ddd"/></svg>
<div style="position:absolute;left:875px;top:333.41px;font-family:'Liberation Sans', sans-serif;font-size:15.7px;line-height:15.7px;color:#dce6fb;font-weight:700;white-space:pre;letter-spacing:0px;">[2]Vented : Audio Havoc 18RRP</div>
<div style="position:absolute;left:1248px;top:327px;width:24px;height:24px;border:1px solid #dfe6fb;border-radius:3px;background:linear-gradient(135deg,#6f95f6 0%,#4a78ee 50%,#3e6be6 100%)"></div>
<div style="position:absolute;left:1253px;top:345px;width:11px;height:4px;background:#fff"></div>
<div style="position:absolute;left:1277px;top:327px;width:24px;height:24px;border:1px solid #b0c0f0;border-radius:3px;background:linear-gradient(135deg,#8aa6f0 0%,#6e8fe8 50%,#5a7ee0 100%)"></div>
<div style="position:absolute;left:1280px;top:330px;width:14px;height:14px;border:3px solid #8ea0e8"></div>
<div style="position:absolute;left:1306px;top:327px;width:25px;height:24px;border:1px solid #b0c0f0;border-radius:3px;background:linear-gradient(135deg,#c88a9a 0%,#c06878 50%,#b05a6a 100%)"></div>
<svg style="position:absolute;left:1306px;top:327px" width="27" height="26"><path d="M5,5.6 L22,22 M22,5.6 L5,22" stroke="#fff" stroke-width="3.5" stroke-linecap="butt"/></svg>
<div style="position:absolute;left:849px;top:356px;width:1px;height:277px;background:#fff"></div>
<div style="position:absolute;left:849px;top:379px;width:486px;height:237px;border-top:1px solid #fff;border-right:1px solid #aca899;box-sizing:border-box"></div>
<div style="position:absolute;left:851px;top:359px;width:53px;height:20px;background:#ece9d8;border-top:1px solid #fbfaf4;border-left:1px solid #f6f4ea;box-sizing:border-box;"></div>
<div style="position:absolute;left:857px;top:363.00px;font-family:'Liberation Sans', sans-serif;font-size:13px;line-height:13px;color:#000;font-weight:400;white-space:pre;letter-spacing:0px;">Driver</div>
<div style="position:absolute;left:904px;top:357px;width:57px;height:24px;background:#ece9d8;border-top:1px solid #fbfaf4;border-left:1px solid #f6f4ea;box-sizing:border-box;border-right:2px solid #aca899;border-right:2px solid #aca899;"></div>
<div style="position:absolute;left:910.5px;top:361.00px;font-family:'Liberation Sans', sans-serif;font-size:13px;line-height:13px;color:#000;font-weight:400;white-space:pre;letter-spacing:0px;">Box</div>
<div style="position:absolute;left:961px;top:359px;width:51px;height:20px;background:#ece9d8;border-top:1px solid #fbfaf4;border-left:1px solid #f6f4ea;box-sizing:border-box;border-right:2px solid #aca899;"></div>
<div style="position:absolute;left:963.5px;top:363.00px;font-family:'Liberation Sans', sans-serif;font-size:13px;line-height:13px;color:#000;font-weight:400;white-space:pre;letter-spacing:0px;">Vents</div>
<div style="position:absolute;left:1012px;top:359px;width:54px;height:20px;background:#ece9d8;border-top:1px solid #fbfaf4;border-left:1px solid #f6f4ea;box-sizing:border-box;border-right:2px solid #aca899;"></div>
<div style="position:absolute;left:1018px;top:363.00px;font-family:'Liberation Sans', sans-serif;font-size:13px;line-height:13px;color:#000;font-weight:400;white-space:pre;letter-spacing:0px;">Plot</div>
<div style="position:absolute;left:1066px;top:359px;width:54px;height:20px;background:#ece9d8;border-top:1px solid #fbfaf4;border-left:1px solid #f6f4ea;box-sizing:border-box;border-right:2px solid #aca899;"></div>
<div style="position:absolute;left:1072.5px;top:363.00px;font-family:'Liberation Sans', sans-serif;font-size:13px;line-height:13px;color:#000;font-weight:400;white-space:pre;letter-spacing:0px;">Signal</div>
<div style="position:absolute;left:1120px;top:359px;width:67px;height:20px;background:#ece9d8;border-top:1px solid #fbfaf4;border-left:1px solid #f6f4ea;box-sizing:border-box;border-right:2px solid #aca899;"></div>
<div style="position:absolute;left:1126.5px;top:363.00px;font-family:'Liberation Sans', sans-serif;font-size:13px;line-height:13px;color:#000;font-weight:400;white-space:pre;letter-spacing:0px;">EQ/Filter</div>
<div style="position:absolute;left:1187px;top:359px;width:54px;height:20px;background:#ece9d8;border-top:1px solid #fbfaf4;border-left:1px solid #f6f4ea;box-sizing:border-box;border-right:2px solid #aca899;"></div>
<div style="position:absolute;left:1193px;top:363.00px;font-family:'Liberation Sans', sans-serif;font-size:13px;line-height:13px;color:#000;font-weight:400;white-space:pre;letter-spacing:0px;">Project</div>
<div style="position:absolute;left:859px;top:388px;width:371px;height:21px;border-top:1px solid #aca899;border-left:1px solid #aca899;border-bottom:1px solid #fff;border-right:1px solid #fff;box-sizing:border-box"></div>
<div style="position:absolute;left:859.5px;top:392.00px;font-family:'Liberation Sans', sans-serif;font-size:13px;line-height:13px;color:#000;font-weight:400;white-space:pre;letter-spacing:0px;">Vented</div>
<div style="position:absolute;left:1235px;top:389px;width:88px;height:21px;border-top:1px solid #fff;border-left:1px solid #fff;border-bottom:1px solid #aca899;border-right:1px solid #aca899;box-sizing:border-box"></div>
<div style="position:absolute;left:1235px;top:389px;width:88px;height:21px;font-family:'Liberation Sans', sans-serif;font-size:13px;line-height:21px;text-align:center;white-space:pre;letter-spacing:0.25px">Box shape</div>
<div style="position:absolute;left:859px;top:414px;width:131px;height:18px;border-top:1px solid #fff;border-left:1px solid #fff;border-bottom:1px solid #aca899;border-right:1px solid #aca899;box-sizing:border-box"></div>
<div style="position:absolute;left:859px;top:414px;width:131px;height:18px;font-family:'Liberation Sans', sans-serif;font-size:13px;line-height:18px;text-align:center;white-space:pre;letter-spacing:0.45px">Rear chamber</div>
<div style="position:absolute;left:995px;top:414px;width:124px;height:18px;border-top:1px solid #fff;border-left:1px solid #fff;border-bottom:1px solid #aca899;border-right:1px solid #aca899;box-sizing:border-box"></div>
<div style="position:absolute;left:995px;top:414px;width:124px;height:18px;font-family:'Liberation Sans', sans-serif;font-size:13px;line-height:18px;text-align:center;white-space:pre;letter-spacing:0.25px">Front chamber</div>
<div style="position:absolute;left:859px;top:438px;width:131px;height:168px;border-top:1px solid #aca899;border-left:1px solid #aca899;border-bottom:1px solid #fff;border-right:1px solid #fff;box-sizing:border-box"></div>
<div style="position:absolute;left:865px;top:446.00px;font-family:'Liberation Sans', sans-serif;font-size:13px;line-height:13px;color:#1c1ca0;font-weight:400;white-space:pre;letter-spacing:0.4px;">Volume:</div>
<div style="position:absolute;left:865px;top:464px;width:81px;height:22px;background:#fff;border:1px solid #a7a6aa;box-sizing:border-box"></div>
<div style="position:absolute;left:868px;top:468.00px;font-family:'Liberation Sans', sans-serif;font-size:13px;line-height:13px;color:#000;font-weight:400;white-space:pre;letter-spacing:0px;">300,00</div>
<div style="position:absolute;left:953px;top:474.00px;font-family:'Liberation Sans', sans-serif;font-size:13px;line-height:13px;color:#000;font-weight:400;white-space:pre;letter-spacing:0px;">l</div>
<div style="position:absolute;left:865px;top:490.00px;font-family:'Liberation Sans', sans-serif;font-size:13px;line-height:13px;color:#1c1ca0;font-weight:400;white-space:pre;letter-spacing:0px;">Tuning freq.:</div>
<div style="position:absolute;left:865px;top:507px;width:81px;height:22px;background:#fff;border:1px solid #a7a6aa;box-sizing:border-box"></div>
<div style="position:absolute;left:868px;top:511.00px;font-family:'Liberation Sans', sans-serif;font-size:13px;line-height:13px;color:#000;font-weight:400;white-space:pre;letter-spacing:0px;">0,030</div>
<div style="position:absolute;left:953px;top:519.00px;font-family:'Liberation Sans', sans-serif;font-size:13px;line-height:13px;color:#000;font-weight:400;white-space:pre;letter-spacing:0px;">kHz</div>
<div style="position:absolute;left:888px;top:584.00px;font-family:'Liberation Sans', sans-serif;font-size:13px;line-height:13px;color:#000;font-weight:400;white-space:pre;letter-spacing:0.2px;">Advanced-></div>
<svg style="position:absolute;left:1123px;top:418px" width="89" height="119" viewBox="0 0 89 119"><rect x="1" y="1" width="86" height="116" fill="#fff" stroke="#000" stroke-width="2"/><rect x="63" y="26" width="9" height="40" rx="3" fill="#000"/><path d="M71,33 L78,24 Q82,19 87,18 L87,72 Q82,71 78,67 L71,58 Z" fill="#000"/><rect x="80" y="29" width="2" height="2" fill="#bbb"/><rect x="80" y="43" width="3" height="2" fill="#bbb"/><rect x="80" y="57" width="2" height="2" fill="#bbb"/><rect x="42" y="87" width="46" height="3" fill="#000"/><rect x="42" y="105" width="46" height="3" fill="#000"/></svg>
<div style="position:absolute;left:849px;top:615px;width:486px;height:1px;background:#716f64"></div>
<div style="position:absolute;left:849px;top:616px;width:191px;height:15px;background:#ece9d8;border-top:1px solid #fff;box-sizing:border-box"></div>
<div style="position:absolute;left:849px;top:616px;width:191px;height:15px;font-family:'Liberation Serif', serif;font-size:14px;font-weight:700;line-height:15px;text-align:center;white-space:pre;letter-spacing:0.3px;padding-top:2px;box-sizing:border-box">Parameters</div>
<div style="position:absolute;left:1040px;top:616px;width:295px;height:15px;background:#ff8000;border-top:1px solid #fff;border-left:1px solid #909090;box-sizing:border-box"></div>
<div style="position:absolute;left:849px;top:631px;width:486px;height:1px;background:#e8ecff"></div></body></html>
